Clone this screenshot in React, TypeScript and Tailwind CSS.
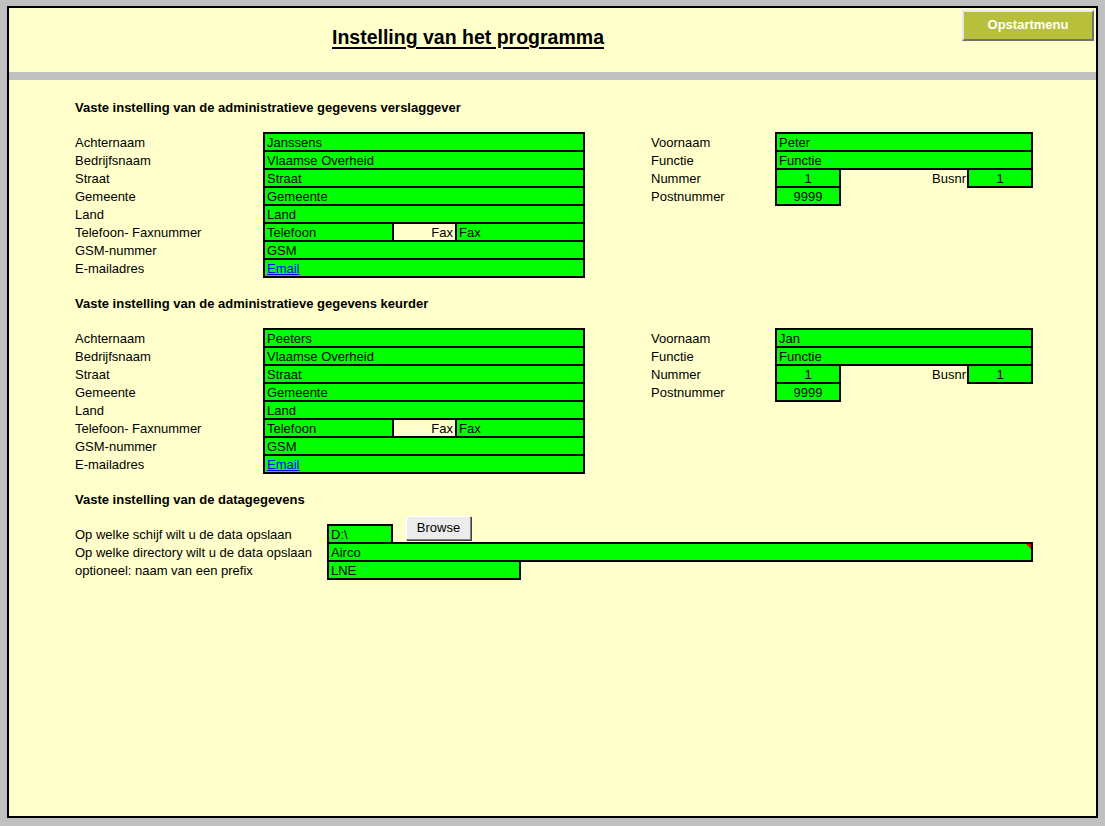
import React from "react";

const FONT = "font-['Liberation_Sans',Arial,sans-serif]";

type Row = { label: string };

function Cell({
  w,
  children,
  align = "left",
  bg = "bg-[#00ff00]",
  first = false,
  extra = "",
}: {
  w: string;
  children?: React.ReactNode;
  align?: "left" | "center" | "right";
  bg?: string;
  first?: boolean;
  extra?: string;
}) {
  const a = align === "center" ? "text-center" : align === "right" ? "text-right" : "text-left";
  return (
    <div
      className={`${w} ${bg} ${a} ${first ? "" : "-ml-[2px]"} ${extra} h-[20px] shrink-0 whitespace-nowrap border-2 border-black px-[2px] text-[13px] leading-[18px] text-black`}
    >
      {children}
    </div>
  );
}

function Labels({ items, width }: { items: Row[]; width: string }) {
  return (
    <div className={`${width} shrink-0 pt-[2px]`}>
      {items.map((r) => (
        <div key={r.label} className="h-[18px] whitespace-nowrap text-[13px] leading-[18px] text-black">
          {r.label}
        </div>
      ))}
    </div>
  );
}

function PersonBlock({
  heading,
  achternaam,
  voornaam,
}: {
  heading: string;
  achternaam: string;
  voornaam: string;
}) {
  const left = [
    "Achternaam",
    "Bedrijfsnaam",
    "Straat",
    "Gemeente",
    "Land",
    "Telefoon- Faxnummer",
    "GSM-nummer",
    "E-mailadres",
  ].map((label) => ({ label }));
  const right = ["Voornaam", "Functie", "Nummer", "Postnummer"].map((label) => ({ label }));

  return (
    <div>
      <h2 className="h-[16px] text-[13px] font-bold leading-[18px] text-black">{heading}</h2>
      <div className="mt-[17px] flex">
        <Labels items={left} width="w-[188px]" />
        <div className="w-[322px] shrink-0">
          <div className="flex">
            <Cell w="w-[322px]" first>
              {achternaam}
            </Cell>
          </div>
          <div className="-mt-[2px] flex">
            <Cell w="w-[322px]" first>
              Vlaamse Overheid
            </Cell>
          </div>
          <div className="-mt-[2px] flex">
            <Cell w="w-[322px]" first>
              Straat
            </Cell>
          </div>
          <div className="-mt-[2px] flex">
            <Cell w="w-[322px]" first>
              Gemeente
            </Cell>
          </div>
          <div className="-mt-[2px] flex">
            <Cell w="w-[322px]" first>
              Land
            </Cell>
          </div>
          <div className="-mt-[2px] flex">
            <Cell w="w-[131px]" first>
              Telefoon
            </Cell>
            <Cell w="w-[65px]" align="right" bg="bg-[#ffffcc]">
              Fax
            </Cell>
            <Cell w="w-[130px]">Fax</Cell>
          </div>
          <div className="-mt-[2px] flex">
            <Cell w="w-[322px]" first>
              GSM
            </Cell>
          </div>
          <div className="-mt-[2px] flex">
            <Cell w="w-[322px]" first>
              <a href="#" className="text-[#0000ff] underline">
                Email
              </a>
            </Cell>
          </div>
        </div>

        <div className="ml-[66px] flex">
          <Labels items={right} width="w-[124px]" />
          <div className="w-[258px] shrink-0">
            <div className="flex">
              <Cell w="w-[258px]" first>
                {voornaam}
              </Cell>
            </div>
            <div className="-mt-[2px] flex">
              <Cell w="w-[258px]" first>
                Functie
              </Cell>
            </div>
            <div className="-mt-[2px] flex">
              <Cell w="w-[66px]" align="center" first>
                1
              </Cell>
              <div className="h-[20px] w-[126px] shrink-0 pr-[1px] pt-[2px] text-right text-[13px] leading-[18px] text-black">
                Busnr
              </div>
              <Cell w="w-[66px]" align="center" first>
                1
              </Cell>
            </div>
            <div className="-mt-[2px] flex">
              <Cell w="w-[66px]" align="center" first>
                9999
              </Cell>
            </div>
          </div>
        </div>
      </div>
    </div>
  );
}

export default function App() {
  return (
    <div className={`${FONT} h-[826px] w-full overflow-hidden bg-[#c0c0c0] pl-[7px] pt-[6px]`}>
      <div className="flex h-[812px] w-[1091px] flex-col border-2 border-black bg-[#ffffcc]">
        {/* header */}
        <div className="flex h-[64px] items-start">
          <h1 className="ml-[323px] mt-[18px] text-[19.5px] font-bold leading-[22px] text-black underline decoration-2 underline-offset-[3px]">
            Instelling van het programma
          </h1>
          <button className="ml-auto mr-[2px] mt-[2px] h-[31px] w-[132px] border-2 border-b-[#707070] border-l-[#e8e8e8] border-r-[#707070] border-t-[#e8e8e8] bg-[#b8bf3a] pb-[2px] text-[13px] font-bold text-white">
            Opstartmenu
          </button>
        </div>
        <div className="h-[8px] bg-[#c0c0c0]" />

        <div className="pl-[66px] pt-[19px]">
          <PersonBlock
            heading="Vaste instelling van de administratieve gegevens verslaggever"
            achternaam="Janssens"
            voornaam="Peter"
          />
          <div className="mt-[17px]">
            <PersonBlock
              heading="Vaste instelling van de administratieve gegevens keurder"
              achternaam="Peeters"
              voornaam="Jan"
            />
          </div>

          <div className="mt-[17px]">
            <h2 className="h-[16px] text-[13px] font-bold leading-[18px] text-black">
              Vaste instelling van de datagegevens
            </h2>
            <div className="mt-[17px] flex">
              <Labels
                items={[
                  { label: "Op welke schijf wilt u de data opslaan" },
                  { label: "Op welke directory wilt u de data opslaan" },
                  { label: "optioneel: naam van een prefix" },
                ]}
                width="w-[252px]"
              />
              <div className="w-[706px] shrink-0">
                <div className="flex items-start">
                  <Cell w="w-[66px]" first>
                    D:\
                  </Cell>
                  <button className="-mt-[8px] ml-[13px] h-[24px] w-[65px] shrink-0 border border-b-[#808080] border-l-[#ffffff] border-r-[#808080] border-t-[#ffffff] bg-[#ececec] text-[13px] leading-[20px] text-black shadow-[1px_1px_0_#404040]">
                    Browse
                  </button>
                </div>
                <div className="-mt-[2px] flex">
                  <Cell w="w-[706px]" first extra="relative">
                    Airco
                    <span className="absolute right-0 top-0 h-0 w-0 border-l-[5px] border-t-[5px] border-l-transparent border-t-[#ff0000]" />
                  </Cell>
                </div>
                <div className="-mt-[2px] flex">
                  <Cell w="w-[194px]" first>
                    LNE
                  </Cell>
                </div>
              </div>
            </div>
          </div>
        </div>
      </div>
    </div>
  );
}
